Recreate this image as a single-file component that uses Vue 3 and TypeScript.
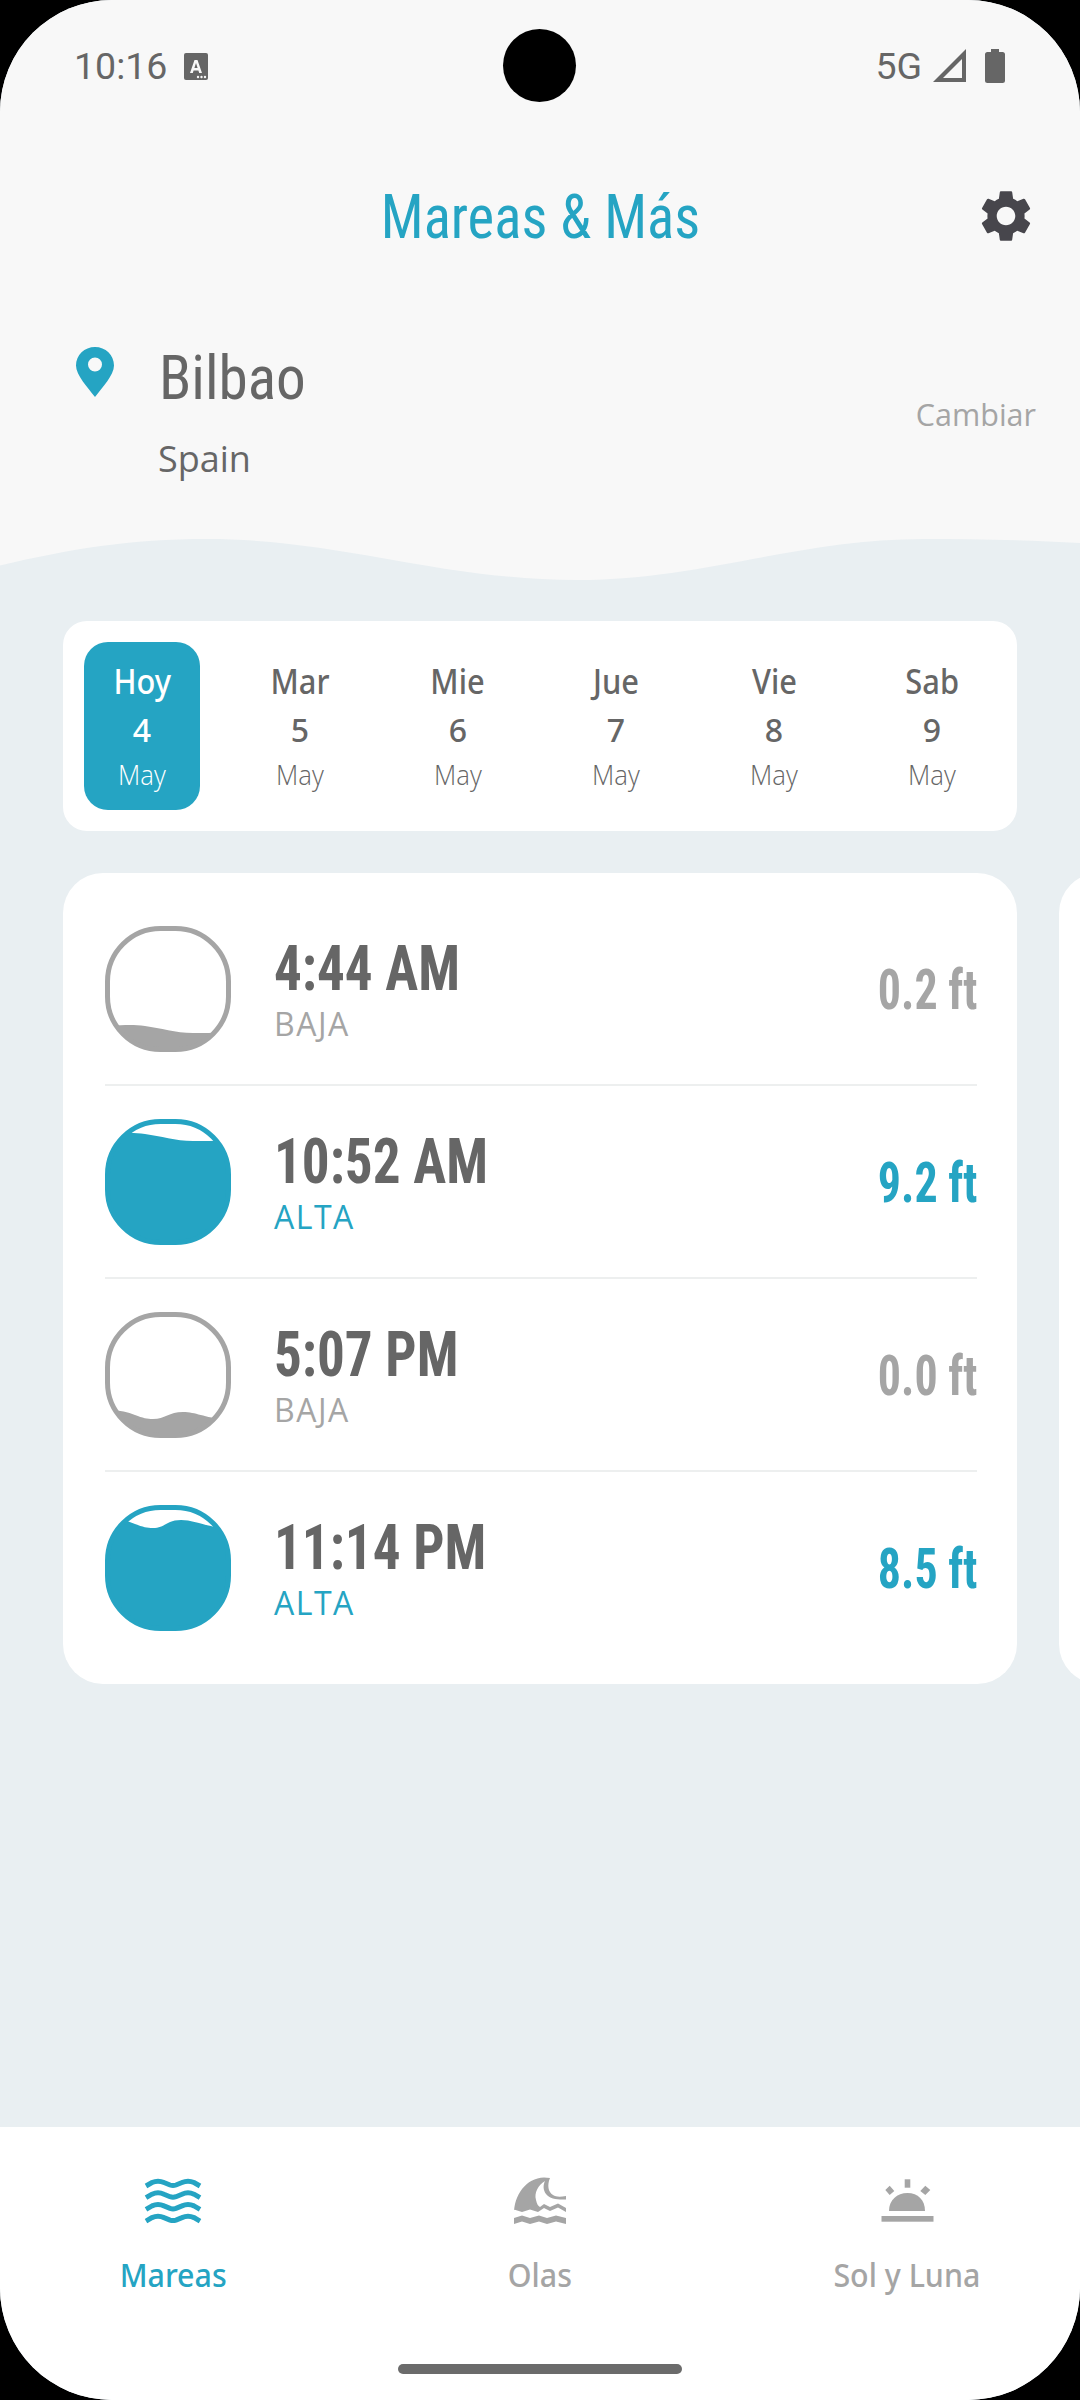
<script setup lang="ts">
interface Tide {
  time: string
  kind: 'BAJA' | 'ALTA'
  height: string
  wave: string
}

const days = [
  { name: 'Hoy', num: 4 },
  { name: 'Mar', num: 5 },
  { name: 'Mie', num: 6 },
  { name: 'Jue', num: 7 },
  { name: 'Vie', num: 8 },
  { name: 'Sab', num: 9 },
]

// water surface of each tide icon, in the icon's 126 box
const tides: Tide[] = [
  { time: '4:44 AM', kind: 'BAJA', height: '0.2 ft', wave: 'M0 100C12 100 24 98 40 100C56 102 70 107 88 107C100 107 112 107 126 106V126H0Z' },
  { time: '10:52 AM', kind: 'ALTA', height: '9.2 ft', wave: 'M0 15C12 15 24 13 40 15C56 17 70 22 88 22C100 22 112 22 126 21V126H0Z' },
  { time: '5:07 PM', kind: 'BAJA', height: '0.0 ft', wave: 'M0 98C14 98 22 100 30 103C38 106 42 107 48 107C60 107 64 100 78 100C92 100 98 106 126 108V126H0Z' },
  { time: '11:14 PM', kind: 'ALTA', height: '8.5 ft', wave: 'M0 13C14 13 22 16 30 19C38 22 42 23 48 23C60 23 62 15 76 15C90 15 96 21 126 24V126H0Z' },
]

const tabs = ['Mareas', 'Olas', 'Sol y Luna']
const waveRows = [1, 12.7, 24.4, 36.1]
</script>

<template>
  <div class="screen">
    <header class="head">
      <div class="status">
        <div class="status-left">
          <span class="clock">10:16</span>
          <svg class="a-icon" viewBox="0 0 24 27" width="24" height="27">
            <rect width="24" height="27" rx="2" fill="#666" />
            <path d="M6 20 10.500 7h3L18 20h-2.800l-.8-2.600h-4.800L8.800 20zM10.400 15h3.200L12 10z" fill="#f8f8f8" />
            <circle cx="14" cy="24" r="1.200" fill="#f8f8f8" />
            <circle cx="17.500" cy="24" r="1.200" fill="#f8f8f8" />
            <circle cx="21" cy="24" r="1.200" fill="#f8f8f8" />
          </svg>
        </div>
        <div class="status-right">
          <span class="clock">5G</span>
          <svg viewBox="0 0 33 33" width="33" height="33" class="signal">
            <path d="M33 0V33H0ZM29 10 10 29H29Z" fill="#666" fill-rule="evenodd" />
          </svg>
          <svg viewBox="0 0 20 34" width="20" height="34" class="battery">
            <path d="M6 0h8v3h3.500A2.500 2.500 0 0 1 20 5.500V31.500A2.500 2.500 0 0 1 17.500 34H2.500A2.500 2.500 0 0 1 0 31.500V5.500A2.500 2.500 0 0 1 2.500 3H6Z" fill="#666" />
          </svg>
        </div>
      </div>

      <div class="title-row">
        <h1 class="title">Mareas &amp; Más</h1>
        <svg class="gear" viewBox="0 0 24 24" width="62" height="62">
          <path fill="#47464c" d="M19.14 12.94c.04-.3.06-.61.06-.94 0-.32-.02-.64-.07-.94l2.03-1.58c.18-.14.23-.41.12-.61l-1.92-3.32c-.12-.22-.37-.29-.59-.22l-2.39.96c-.5-.38-1.03-.7-1.62-.94l-.36-2.54c-.04-.24-.24-.41-.48-.41h-3.84c-.24 0-.43.17-.47.41l-.36 2.54c-.59.24-1.13.57-1.62.94l-2.39-.96c-.22-.08-.47 0-.59.22L2.74 8.87c-.12.21-.08.47.12.61l2.03 1.58c-.05.3-.09.63-.09.94s.02.64.07.94l-2.03 1.58c-.18.14-.23.41-.12.61l1.92 3.32c.12.22.37.29.59.22l2.39-.96c.5.38 1.03.7 1.62.94l.36 2.54c.05.24.24.41.48.41h3.84c.24 0 .44-.17.47-.41l.36-2.54c.59-.24 1.13-.56 1.62-.94l2.39.96c.22.08.47 0 .59-.22l1.92-3.32c.12-.22.07-.47-.12-.61l-2.01-1.58zM12 15.6c-1.98 0-3.6-1.62-3.6-3.6s1.62-3.6 3.6-3.6 3.6 1.62 3.6 3.6-1.62 3.6-3.6 3.6z" />
        </svg>
      </div>

      <div class="place">
        <svg class="pin" viewBox="0 0 38 50" width="38" height="50">
          <path fill="#25a4c3" fill-rule="evenodd" d="M19 0C8.500 0 0 8 0 18.500 0 28 12 41 19 50 26 41 38 28 38 18.500 38 8 29.500 0 19 0ZM19 10.500A7 7 0 1 1 19 24.500 7 7 0 0 1 19 10.500Z" />
        </svg>
        <div class="place-text">
          <div class="city">Bilbao</div>
          <div class="country">Spain</div>
        </div>
        <span class="change">Cambiar</span>
      </div>
    </header>

    <svg class="wave" viewBox="0 0 1080 48" width="1080" height="48">
      <path fill="#f8f8f8" d="M0 0H1080V5C1030 2 975 1 923 1C800 1 700 42 578 42C440 42 340 1 207 1C130 1 70 11 0 27.500Z" />
    </svg>

    <main class="body">
      <section class="calendar">
        <div v-for="(d, i) in days" :key="d.num" class="day" :class="{ active: i === 0 }">
          <span class="day-name">{{ d.name }}</span>
          <span class="day-num">{{ d.num }}</span>
          <span class="day-month">May</span>
        </div>
      </section>

      <div class="cards">
        <section class="card">
          <div v-for="(t, i) in tides" :key="t.time" class="tide" :class="{ last: i === tides.length - 1 }">
            <svg class="level" viewBox="0 0 126 126" width="126" height="126" :class="t.kind === 'ALTA' ? 'high' : 'low'">
              <defs>
                <clipPath :id="`inner-${i}`">
                  <rect x="4" y="4" width="118" height="118" rx="50" />
                </clipPath>
              </defs>
              <path :d="t.wave" :clip-path="`url(#inner-${i})`" class="water" />
              <rect x="2.500" y="2.500" width="121" height="121" rx="53" class="rim" />
            </svg>
            <div class="tide-text">
              <div class="tide-time">{{ t.time }}</div>
              <div class="tide-kind" :class="{ up: t.kind === 'ALTA' }">{{ t.kind }}</div>
            </div>
            <div class="tide-height" :class="{ up: t.kind === 'ALTA' }">{{ t.height }}</div>
          </div>
        </section>
        <section class="card-next"></section>
      </div>
    </main>

    <nav class="tabs">
      <div v-for="(tab, i) in tabs" :key="tab" class="tab" :class="{ on: i === 0 }">
        <svg v-if="i === 0" viewBox="0 0 80 70" width="80" height="70">
          <g fill="none" stroke="#25a4c3" stroke-width="5">
            <path
              v-for="y in waveRows"
              :key="y"
              d="M13 20 19 16.500Q25 13.800 31 16.500L37 19Q40 20 43 19L49 16.500Q55 13.800 61 16.500L67 20"
              :transform="`translate(0 ${y})`"
            />
          </g>
        </svg>
        <svg v-else-if="i === 1" viewBox="0 0 80 70" width="80" height="70">
          <g fill="#a5a5a5">
            <path d="M14 49C14 30 26 13 44 12.500L50 13C47 20 48 27 53 30C56 32 60 32 66 31V34.500C58 35 50 34 46 29C43 25 43 20 45 16C38 20 34 28 36 35C37 39 38 41 40 42L44 39 50 42 58 38.500 66 43V47L58 42.500 50 46 44 43 38 47 30 44.500 22 47 14 44.500Z" />
            <path d="M14 53 22 50.500 30 53 39 50.500 47 53 56 50.500 66 53V59L56 56.500 47 59 39 56.500 30 59 22 56.500 14 59Z" />
          </g>
        </svg>
        <svg v-else viewBox="0 0 80 70" width="80" height="70">
          <g fill="#a5a5a5">
            <path d="M22 46C22 35 30 28 40.500 28C51 28 58 35 58 46Z" />
            <rect x="14.500" y="51" width="52" height="5.700" />
            <rect x="37.700" y="14.300" width="5.600" height="8.400" />
            <path d="M18.300 25 22.700 20.700 27.300 26 22.700 30ZM53.300 26 58.300 20.700 63.300 25 58.300 30Z" />
          </g>
        </svg>
        <span class="tab-label">{{ tab }}</span>
      </div>
      <div class="home-bar"></div>
    </nav>

    <div class="camera"></div>
  </div>
</template>

<style scoped>
.screen {
  position: relative;
  width: 1080px;
  height: 2400px;
  display: flex;
  flex-direction: column;
  overflow: hidden;
  border-radius: 112px;
  background: #e9eff2;
  font-family: 'Open Sans', sans-serif;
  color: #666;
}
.head {
  background: #f8f8f8;
  height: 538px;
  flex: none;
}
.status {
  height: 134px;
  padding: 45px 75px 0 74px;
  display: flex;
  justify-content: space-between;
  box-sizing: border-box;
}
.status-left,
.status-right {
  display: flex;
  align-items: flex-start;
}
.clock {
  font-family: Roboto, sans-serif;
  font-size: 37.500px;
  line-height: 42px;
  color: #666;
}
.a-icon {
  margin: 8px 0 0 17px;
}
.signal {
  margin: 4px 0 0 11px;
}
.battery {
  margin: 4px 0 0 19px;
}
.title-row {
  position: relative;
  margin-top: 32px;
  height: 100px;
  display: flex;
  align-items: center;
  justify-content: center;
}
.title {
  margin: 0;
  font-family: Roboto, sans-serif;
  font-stretch: 75%;
  font-weight: 400;
  font-size: 62px;
  color: #25a4c3;
  transform: scaleX(0.915);
}
.gear {
  position: absolute;
  right: 43px;
  top: 19px;
}
.place {
  margin-top: 81px;
  padding: 0 44px 0 76px;
  display: flex;
  align-items: flex-start;
  position: relative;
}
.pin {
  flex: none;
}
.place-text {
  margin-left: 45px;
  flex: 1;
}
.city {
  font-family: Roboto, sans-serif;
  font-stretch: 75%;
  font-size: 62px;
  line-height: 62px;
  color: #666;
  transform: scaleX(0.955);
  transform-origin: left center;
}
.country {
  margin-top: 27px;
  font-size: 36px;
  line-height: 46px;
  margin-left: -1px;
}
.change {
  margin-top: 46px;
  font-size: 30.500px;
  color: #a5a5a5;
}
.wave {
  display: block;
  flex: none;
}
.body {
  flex: 1;
  min-height: 0;
  padding: 35px 0 0 63px;
}
.calendar {
  width: 954px;
  height: 210px;
  padding: 21px;
  box-sizing: border-box;
  background: #fff;
  border-radius: 24px;
  display: flex;
  gap: 42px;
}
.day {
  width: 116px;
  height: 168px;
  border-radius: 24px;
  display: flex;
  flex-direction: column;
  align-items: center;
  color: #666;
  padding-top: 16px;
  box-sizing: border-box;
}
.day.active {
  background: #25a4c3;
  color: #fff;
}
.day-name {
  font-family: 'Noto Sans', sans-serif;
  font-size: 33.500px;
  font-weight: 500;
  line-height: 46px;
  transform: scaleX(0.92);
}
.day-num {
  margin-top: 3px;
  font-family: 'Noto Sans', sans-serif;
  font-size: 32px;
  font-weight: 500;
  line-height: 46px;
}
.day-month {
  margin-top: -1px;
  font-size: 28px;
  font-weight: 300;
  line-height: 44px;
  transform: scaleX(0.92);
}
.cards {
  margin-top: 42px;
  display: flex;
  gap: 42px;
}
.card {
  width: 954px;
  height: 811px;
  flex: none;
  padding: 20px 40px 0 42px;
  box-sizing: border-box;
  background: #fff;
  border-radius: 40px;
}
.card-next {
  width: 100px;
  height: 811px;
  flex: none;
  background: #fff;
  border-radius: 40px;
}
.tide {
  height: 193px;
  padding-top: 33px;
  box-sizing: border-box;
  display: flex;
  align-items: flex-start;
  border-bottom: 2px solid #edefef;
}
.tide.last {
  border-bottom: 0;
}
.level {
  flex: none;
}
.low .water {
  fill: #a5a5a5;
}
.high .water {
  fill: #25a4c3;
}
.rim {
  fill: none;
  stroke-width: 5;
}
.low .rim {
  stroke: #a5a5a5;
}
.high .rim {
  stroke: #25a4c3;
}
.tide-text {
  flex: 1;
  margin: 9px 0 0 43px;
}
.tide-time {
  font-family: Roboto, sans-serif;
  font-stretch: 75%;
  font-weight: 700;
  font-size: 63px;
  line-height: 68px;
  color: #666;
  transform: scaleX(0.875);
  transform-origin: left center;
}
.tide-kind {
  margin-top: 1px;
  font-size: 32px;
  letter-spacing: 1.500px;
  line-height: 40px;
  color: #a5a5a5;
}
.tide-kind.up {
  color: #25a4c3;
}
.tide-height {
  margin-top: 34px;
  font-family: Roboto, sans-serif;
  font-stretch: 75%;
  font-weight: 700;
  font-size: 56px;
  line-height: 60px;
  color: #a5a5a5;
  transform: scaleX(0.82);
  transform-origin: right center;
}
.tide-height.up {
  color: #25a4c3;
}
.tabs {
  position: relative;
  flex: none;
  height: 273px;
  background: #fff;
  display: grid;
  grid-template-columns: 346px 388px 346px;
}
.tab {
  padding-top: 38px;
  display: flex;
  flex-direction: column;
  align-items: center;
  color: #a5a5a5;
}
.tab.on {
  color: #25a4c3;
}
.tab-label {
  margin-top: 19px;
  font-family: 'Noto Sans', sans-serif;
  font-size: 33px;
  font-weight: 500;
  line-height: 42px;
  white-space: nowrap;
  transform: scaleX(0.92);
}
.home-bar {
  position: absolute;
  left: 398px;
  top: 237px;
  width: 284px;
  height: 10px;
  border-radius: 5px;
  background: #6b6b6b;
}
.camera {
  position: absolute;
  left: 503px;
  top: 29px;
  width: 73px;
  height: 73px;
  border-radius: 50%;
  background: #000;
}
</style>

<style>
html,
body {
  background: #000;
}
</style>
